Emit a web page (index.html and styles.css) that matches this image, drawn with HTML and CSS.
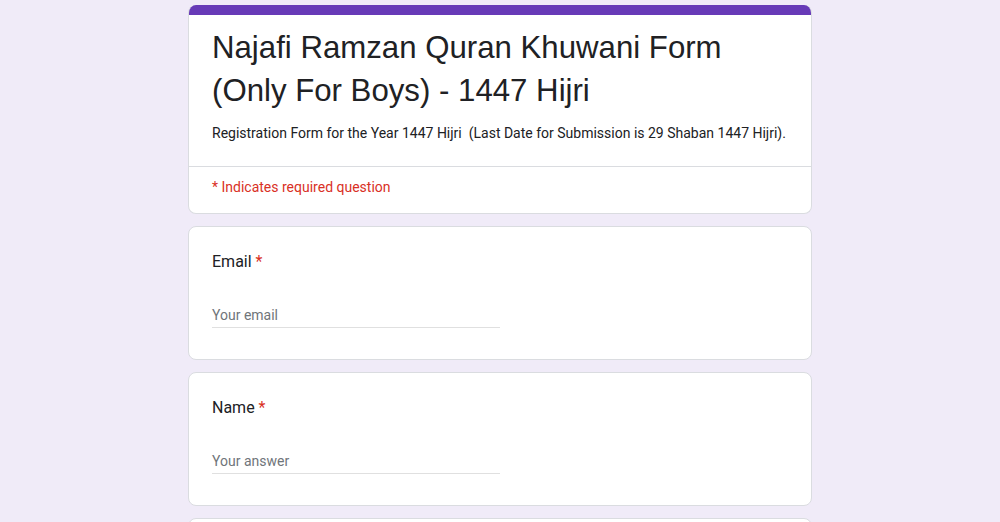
FILE: index.html
```html
<!DOCTYPE html>
<html>
<head>
<meta charset="utf-8">
<link rel="stylesheet" href="styles.css">
</head>
<body>
<div class="page">
  <div class="card header-card">
    <div class="accent"></div>
    <div class="header-main">
      <div class="title">Najafi Ramzan Quran Khuwani Form (Only For Boys) - 1447 Hijri</div>
      <div class="desc">Registration Form for the Year 1447 Hijri&nbsp; (Last Date for Submission is 29 Shaban 1447 Hijri).</div>
    </div>
    <div class="required-note">* Indicates required question</div>
  </div>
  <div class="card question">
    <div class="q-label">Email <span class="star">*</span></div>
    <div class="input">Your email</div>
  </div>
  <div class="card question">
    <div class="q-label">Name <span class="star">*</span></div>
    <div class="input">Your answer</div>
  </div>
  <div class="card question"></div>
</div>
</body>
</html>
```
FILE: styles.css
```css
html, body {
  margin: 0;
  padding: 0;
  background: #f0ebf8;
}
body {
  font-family: Roboto, "Liberation Sans", Arial, sans-serif;
  color: #202124;
}
.page {
  width: 624px;
  margin: 0 auto;
  padding-top: 5px;
  display: flex;
  flex-direction: column;
  gap: 12px;
}
.card {
  background: #fff;
  border: 1px solid #dadce0;
  border-radius: 8px;
  box-sizing: border-box;
  overflow: hidden;
}
.header-card {
  border-top: none;
}
.accent {
  height: 10px;
  background: #673ab7;
  margin: 0 -1px;
}
.header-main {
  padding: 11px 24px 23px 23px;
  border-bottom: 1px solid #dadce0;
}
.title {
  font-family: "Liberation Sans", Arial, sans-serif;
  font-size: 31.2px;
  line-height: 43px;
  color: #202124;
}
.desc {
  margin-top: 11px;
  font-size: 14px;
  line-height: 20px;
  color: #202124;
}
.required-note {
  padding: 10px 23px 16px;
  font-size: 14px;
  line-height: 20px;
  color: #d93025;
}
.question {
  height: 134px;
  padding: 23px 23px;
}
.q-label {
  font-size: 16px;
  line-height: 24px;
  color: #202124;
}
.star {
  color: #d93025;
}
.input {
  margin-top: 30px;
  width: 288px;
  font-size: 14px;
  line-height: 22px;
  color: #70757a;
  border-bottom: 1px solid #e0e0e0;
  padding-bottom: 1px;
}
```
